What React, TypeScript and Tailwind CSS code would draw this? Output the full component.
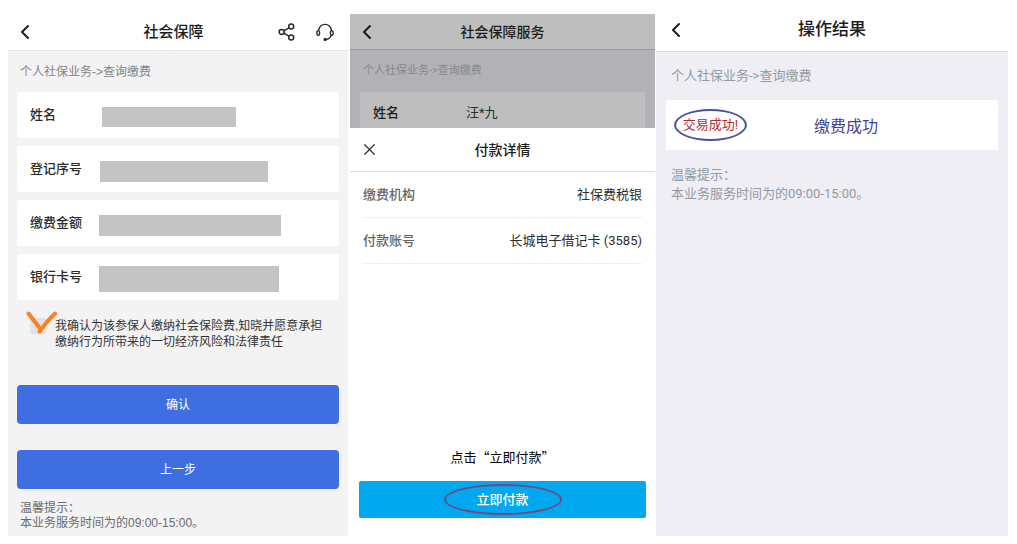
import React from 'react';
import { ChevronLeft, X } from 'lucide-react';

interface MaskedField {
  label: string;
  maskClass: string;
}

interface ScreenHeaderProps {
  title: string;
  className: string;
  titleClass: string;
  children?: React.ReactNode;
}

const maskedFields: MaskedField[] = [
  { label: '姓名', maskClass: 'h-5 w-[134px] ml-0.5' },
  { label: '登记序号', maskClass: 'h-[21px] w-[168px]' },
  { label: '缴费金额', maskClass: 'h-[21px] w-[182px] -ml-px' },
  { label: '银行卡号', maskClass: 'h-[26px] w-[180px] -ml-px' },
];

const paymentRows = [
  { label: '缴费机构', value: '社保费税银' },
  { label: '付款账号', value: '长城电子借记卡 (3585)' },
];

const ShareIcon = () => (
  <svg width="18" height="18" viewBox="0 0 18 18" fill="none" stroke="#2b2b2b" strokeWidth="1.5">
    <circle cx="3.6" cy="9" r="2.5" />
    <circle cx="13.2" cy="3.5" r="2.5" />
    <circle cx="13.2" cy="14.4" r="2.5" />
    <path d="M5.8 7.8 11 4.8M5.8 10.2l5.2 3" />
  </svg>
);

const HeadsetIcon = () => (
  <svg width="18" height="18" viewBox="0 0 18 18" fill="none" stroke="#2b2b2b" strokeWidth="1.4">
    <path d="M2.6 7.6C3.2 3.6 5.6 1.4 9 1.4s5.8 2.2 6.4 6.2" />
    <ellipse cx="2.2" cy="10" rx="1.4" ry="2.4" />
    <ellipse cx="15.8" cy="10" rx="1.4" ry="2.4" />
    <path d="M15.2 12.4c-.8 2.4-2.6 3.9-5.4 4.1" />
    <circle cx="9.2" cy="16.4" r="1" fill="#2b2b2b" />
  </svg>
);

const ScreenHeader: React.FC<ScreenHeaderProps> = ({ title, className, titleClass, children }) => (
  <header className={`grid grid-cols-[1fr_auto_1fr] items-center border-b ${className}`}>
    <button type="button" aria-label="返回" className="justify-self-start">
      <ChevronLeft className="size-6 text-[#1c1c1c]" />
    </button>
    <h2 className={`font-medium text-[#1c1c1c] ${titleClass}`}>{title}</h2>
    <div className="flex items-center justify-end gap-5">{children}</div>
  </header>
);

const QueryScreen = () => (
  <section className="bg-[#f3f3f3] font-['Liberation_Sans','Noto_Sans_CJK_SC',sans-serif]">
    <ScreenHeader
      title="社会保障"
      className="h-[37px] border-[#e6e6e6] bg-white pl-[5px] pr-3.5"
      titleClass="text-[15px]"
    >
      <button type="button" aria-label="分享">
        <ShareIcon />
      </button>
      <button type="button" aria-label="客服">
        <HeadsetIcon />
      </button>
    </ScreenHeader>

    <p className="px-3 pt-3 text-xs leading-[18px] text-[#858585]">个人社保业务-&gt;查询缴费</p>

    <form className="px-[9px] pt-[11px]" onSubmit={(e) => e.preventDefault()}>
      <dl className="flex flex-col gap-2">
        {maskedFields.map((field) => (
          <div key={field.label} className="flex h-[46px] items-center rounded-xs bg-white pl-[13px]">
            <dt className="w-[70px] text-[13px] font-medium text-[#2b2b2b]">{field.label}</dt>
            <dd>
              <div className={`mt-1 bg-[#c3c3c3] ${field.maskClass}`} />
            </dd>
          </div>
        ))}
      </dl>

      <div className="flex pl-[13px] pt-[18px]">
        <div className="relative size-4 shrink-0">
          <input
            id="agree"
            type="checkbox"
            defaultChecked
            className="peer block size-4 appearance-none rounded-xs bg-[#e2e1e8]"
          />
          <svg
            className="pointer-events-none absolute -left-1 -top-2 hidden peer-checked:block"
            width="32"
            height="26"
            viewBox="0 0 32 26"
            fill="none"
            stroke="#ff7f27"
            strokeWidth="4"
            strokeLinecap="round"
          >
            <path d="M2.5 3.5 14.5 19M29 3.5C23 9 18 15 13.5 21.500" />
          </svg>
        </div>
        <label htmlFor="agree" className="ml-[9px] whitespace-nowrap text-xs leading-4 text-[#333]">
          我确认为该参保人缴纳社会保险费,知晓并愿意承担
          <br />
          缴纳行为所带来的一切经济风险和法律责任
        </label>
      </div>

      <div className="flex flex-col gap-[26px] pt-[35px] text-xs text-white">
        <button type="submit" className="h-[39px] rounded-sm bg-[#3f6ee2]">确认</button>
        <button type="button" className="h-[39px] rounded-sm bg-[#3f6ee2]">上一步</button>
      </div>
    </form>

    <p className="px-3 pt-3 text-xs leading-[15px] text-[#6b6b6b]">
      温馨提示：
      <br />
      本业务服务时间为的09:00-15:00。
    </p>
  </section>
);

const PaymentScreen = () => (
  <section className="flex flex-col border-l border-white bg-white font-[Roboto,'Noto_Sans_CJK_SC',sans-serif]">
    {/* page behind the payment sheet, already dimmed */}
    <div className="bg-[#b2b2b6]">
      <ScreenHeader
        title="社会保障服务"
        className="h-9 border-[#98989b] bg-[#bebebe] px-[5px]"
        titleClass="text-sm"
      />
      <p className="px-[13px] pt-3 text-[11px] leading-[18px] text-[#83898e]">个人社保业务-&gt;查询缴费</p>
      <div className="px-2.5 pt-3">
        <dl className="flex h-9 items-center rounded-t-xs bg-[#bebebe] px-[13px] pt-1.5">
          <dt className="w-[93px] text-[13px] font-medium text-[#1f1f1f]">姓名</dt>
          <dd className="text-[13px] text-[#2d2d2d]">汪*九</dd>
        </dl>
      </div>
    </div>

    <div className="flex grow flex-col">
      <header className="grid h-11 grid-cols-[1fr_auto_1fr] items-center border-b border-[#dedede] px-2.5">
        <button type="button" aria-label="关闭" className="justify-self-start">
          <X className="size-[19px] text-[#333]" strokeWidth={1.5} />
        </button>
        <h3 className="text-sm font-medium text-[#1c1c1c]">付款详情</h3>
      </header>
      <dl className="px-[13px] text-[13px]">
        {paymentRows.map((row) => (
          <div key={row.label} className="flex h-[46px] items-center justify-between border-b border-[#f0f0f0]">
            <dt className="font-medium text-[#666]">{row.label}</dt>
            <dd className="text-[#2d2d2d]">{row.value}</dd>
          </div>
        ))}
      </dl>

      <div className="mt-auto px-[9px] pb-[18px]">
        <p className="pb-3.5 text-center font-['Noto_Sans_CJK_SC',sans-serif] text-[13px] leading-5 text-black">
          点击“立即付款”
        </p>
        <button
          type="button"
          className="relative flex h-[37px] w-full items-center justify-center rounded-xs bg-[#00a8f0] text-[13px] font-medium text-white"
        >
          立即付款
          <span className="absolute inset-0 m-auto h-[31px] w-[118px] rounded-[50%] border-2 border-[#74497d]" />
        </button>
      </div>
    </div>
  </section>
);

const ResultScreen = () => (
  <section className="bg-[#eeeef4] font-[Roboto,'Noto_Sans_CJK_SC',sans-serif]">
    <ScreenHeader
      title="操作结果"
      className="h-[38px] border-[#dcdcdc] bg-white px-2 pb-1.5"
      titleClass="text-[17px]"
    />
    <p className="px-[15px] pt-3.5 text-[13px] leading-5 text-[#939ba4]">个人社保业务-&gt;查询缴费</p>
    <div className="px-2.5 pt-3.5">
      <div className="flex h-[50px] items-center bg-white pl-1.5 pl-2">
        <strong className="flex h-8 w-[73px] items-center justify-center rounded-[50%] border-2 border-[#4c5199] text-[13px] font-normal text-[#b52b30]">
          交易成功!
        </strong>
        <span className="ml-[67px] font-['Noto_Sans_CJK_SC',sans-serif] text-base text-[#3f4390]">缴费成功</span>
      </div>
    </div>
    <p className="px-[15px] pt-[15px] text-[13px] leading-[19px] text-[#939ba4]">
      温馨提示：
      <br />
      本业务服务时间为的09:00-15:00。
    </p>
  </section>
);

export default function App() {
  return (
    <main
      lang="zh-CN"
      className="grid min-h-screen grid-cols-[340fr_306fr_352fr] gap-px bg-white pb-2 pl-2 pr-[9px] pt-3.5"
    >
      <QueryScreen />
      <PaymentScreen />
      <ResultScreen />
    </main>
  );
}
